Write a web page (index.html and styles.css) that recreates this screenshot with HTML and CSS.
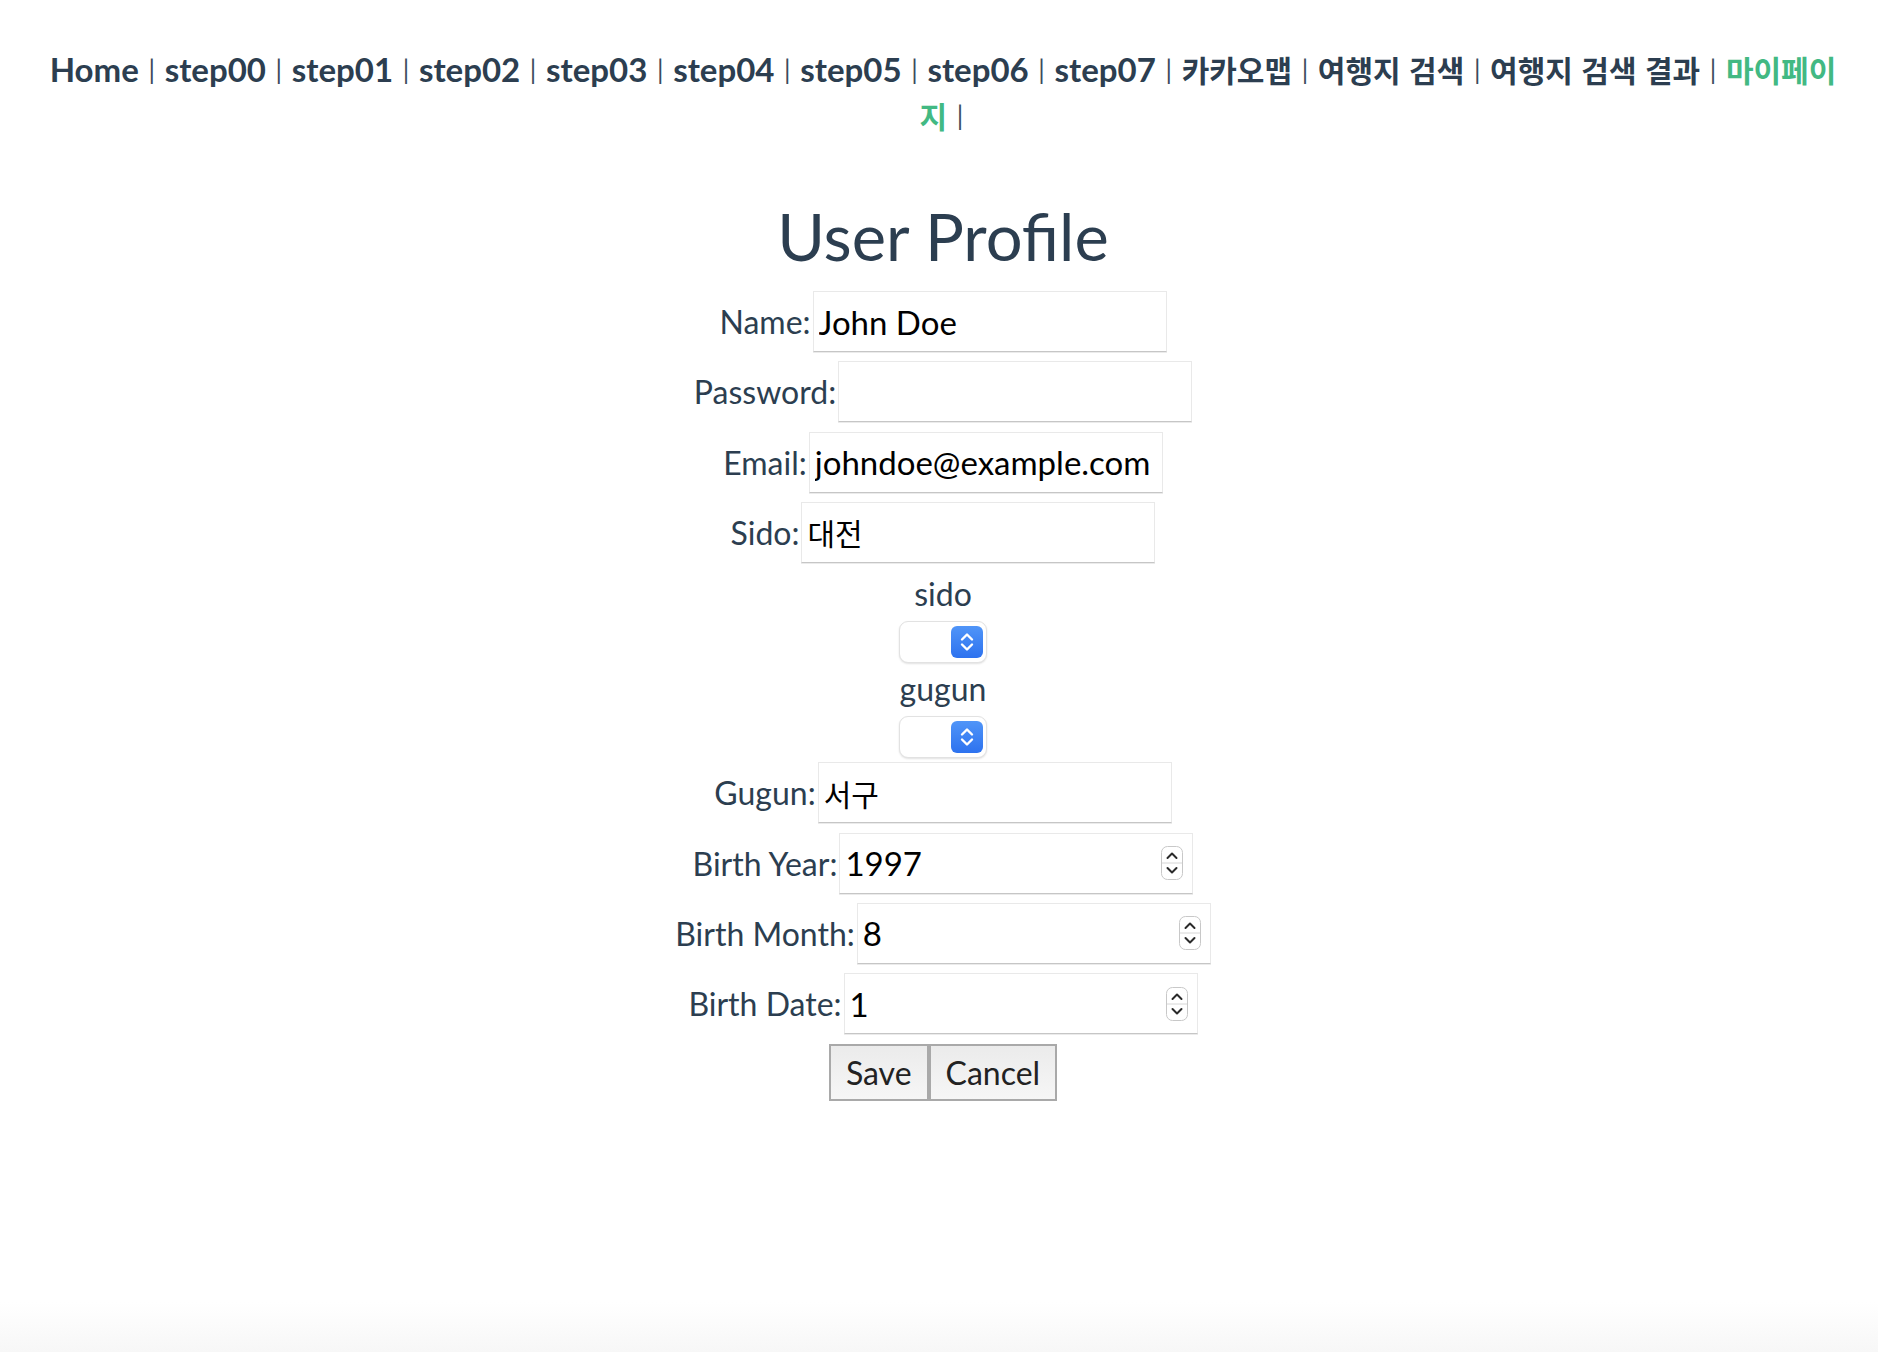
FILE: index.html
```html
<!DOCTYPE html>
<html lang="ko">
<head>
<meta charset="utf-8">
<title>User Profile</title>
<link rel="stylesheet" href="styles.css">
</head>
<body>
<div id="app" class="app">
  <nav class="nav"><a class="nav-link">Home</a><span class="sep"> | </span><a class="nav-link">step00</a><span class="sep"> | </span><a class="nav-link">step01</a><span class="sep"> | </span><a class="nav-link">step02</a><span class="sep"> | </span><a class="nav-link">step03</a><span class="sep"> | </span><a class="nav-link">step04</a><span class="sep"> | </span><a class="nav-link">step05</a><span class="sep"> | </span><a class="nav-link">step06</a><span class="sep"> | </span><a class="nav-link">step07</a><span class="sep"> | </span><a class="nav-link"><span class="ko">카카오맵</span></a><span class="sep"> | </span><a class="nav-link"><span class="ko">여행지 검색</span></a><span class="sep"> | </span><a class="nav-link"><span class="ko">여행지 검색 결과</span></a><span class="sep"> | </span><a class="nav-link active"><span class="ko">마이페이</span><span class="ko">지</span></a><span class="sep"> |</span></nav>

  <main class="profile">
    <h1 class="title">User Profile</h1>
    <form class="form">
      <div class="row"><label class="label">Name:</label><input class="field" type="text" value="John Doe"></div>
      <div class="row"><label class="label">Password:</label><input class="field" type="password" value=""></div>
      <div class="row"><label class="label">Email:</label><input class="field" type="text" value="johndoe@example.com"></div>
      <div class="row"><label class="label">Sido:</label><input class="field field-ko" type="text" value="대전"></div>

      <div class="pick">
        <div class="pick-label">sido</div>
        <span class="select-wrap">
          <select class="select"></select>
          <svg class="select-icon" width="32" height="32" viewBox="0 0 32 32">
            <defs><linearGradient id="gs1" x1="0" y1="0" x2="0" y2="1"><stop offset="0" stop-color="#5095f8"/><stop offset="1" stop-color="#2d72ef"/></linearGradient></defs>
            <rect width="32" height="32" rx="6" fill="url(#gs1)"/>
            <path d="M11 13.5 L16 8.5 L21 13.5" stroke="#fff" stroke-width="2.4" fill="none" stroke-linecap="round" stroke-linejoin="round"/>
            <path d="M11 18.5 L16 23.5 L21 18.5" stroke="#fff" stroke-width="2.4" fill="none" stroke-linecap="round" stroke-linejoin="round"/>
          </svg>
        </span>
      </div>
      <div class="pick">
        <div class="pick-label">gugun</div>
        <span class="select-wrap">
          <select class="select"></select>
          <svg class="select-icon" width="32" height="32" viewBox="0 0 32 32">
            <defs><linearGradient id="gs2" x1="0" y1="0" x2="0" y2="1"><stop offset="0" stop-color="#5095f8"/><stop offset="1" stop-color="#2d72ef"/></linearGradient></defs>
            <rect width="32" height="32" rx="6" fill="url(#gs2)"/>
            <path d="M11 13.5 L16 8.5 L21 13.5" stroke="#fff" stroke-width="2.4" fill="none" stroke-linecap="round" stroke-linejoin="round"/>
            <path d="M11 18.5 L16 23.5 L21 18.5" stroke="#fff" stroke-width="2.4" fill="none" stroke-linecap="round" stroke-linejoin="round"/>
          </svg>
        </span>
      </div>

      <div class="row"><label class="label">Gugun:</label><input class="field field-ko" type="text" value="서구"></div>
      <div class="row"><label class="label">Birth Year:</label>
        <span class="num-wrap"><input class="field" type="text" value="1997">
          <svg class="spin" width="22" height="34" viewBox="0 0 22 34"><rect x="0.5" y="0.5" width="21" height="33" rx="6" fill="#fff" stroke="#c8c8c8"/><line x1="1" y1="17" x2="21" y2="17" stroke="#d6d6d6"/><path d="M6.5 12 L11 7.5 L15.5 12" stroke="#2a2a2a" stroke-width="2" fill="none" stroke-linecap="round" stroke-linejoin="round"/><path d="M6.5 22 L11 26.5 L15.5 22" stroke="#2a2a2a" stroke-width="2" fill="none" stroke-linecap="round" stroke-linejoin="round"/></svg>
        </span>
      </div>
      <div class="row"><label class="label">Birth Month:</label>
        <span class="num-wrap"><input class="field" type="text" value="8">
          <svg class="spin" width="22" height="34" viewBox="0 0 22 34"><rect x="0.5" y="0.5" width="21" height="33" rx="6" fill="#fff" stroke="#c8c8c8"/><line x1="1" y1="17" x2="21" y2="17" stroke="#d6d6d6"/><path d="M6.5 12 L11 7.5 L15.5 12" stroke="#2a2a2a" stroke-width="2" fill="none" stroke-linecap="round" stroke-linejoin="round"/><path d="M6.5 22 L11 26.5 L15.5 22" stroke="#2a2a2a" stroke-width="2" fill="none" stroke-linecap="round" stroke-linejoin="round"/></svg>
        </span>
      </div>
      <div class="row"><label class="label">Birth Date:</label>
        <span class="num-wrap"><input class="field" type="text" value="1">
          <svg class="spin" width="22" height="34" viewBox="0 0 22 34"><rect x="0.5" y="0.5" width="21" height="33" rx="6" fill="#fff" stroke="#c8c8c8"/><line x1="1" y1="17" x2="21" y2="17" stroke="#d6d6d6"/><path d="M6.5 12 L11 7.5 L15.5 12" stroke="#2a2a2a" stroke-width="2" fill="none" stroke-linecap="round" stroke-linejoin="round"/><path d="M6.5 22 L11 26.5 L15.5 22" stroke="#2a2a2a" stroke-width="2" fill="none" stroke-linecap="round" stroke-linejoin="round"/></svg>
        </span>
      </div>

      <div class="actions">
        <button class="btn" type="button">Save</button><button class="btn" type="button">Cancel</button>
      </div>
    </form>
  </main>
</div>
</body>
</html>
```

FILE: styles.css
```css
html {
  min-height: 100%;
  background: linear-gradient(180deg, #ffffff 0, #ffffff calc(100% - 50px), #f7f7f7 100%);
}

body {
  margin: 0 0 0 8px;
}

.app {
  font-family: "Lato", "Noto Sans CJK KR", sans-serif;
  color: #2c3e50;
  text-align: center;
  font-size: 32px;
}

.nav {
  padding: 46px 30px 30px;
  line-height: 46px;
  font-size: 33px;
}

.nav-link {
  font-weight: bold;
  color: #2c3e50;
  text-decoration: none;
}

.nav-link.active {
  color: #42b983;
}

.sep {
  font-family: "Lato", sans-serif;
  font-size: 26px;
  font-weight: normal;
  line-height: 0;
  color: #3a4a5c;
  padding: 0 3px;
  vertical-align: 3px;
}

.ko {
  font-family: "Noto Sans CJK KR", sans-serif;
  font-size: 30px;
  line-height: 0;
}

.title {
  font-size: 65px;
  font-weight: normal;
  line-height: 76px;
  margin: 30px 0 17px;
}

.form {
  display: flex;
  flex-direction: column;
  align-items: center;
}

.row {
  display: flex;
  align-items: center;
  justify-content: center;
  height: 61px;
  margin-bottom: 9.33px;
}

.label {
  font-size: 32px;
  color: #2c3e50;
  margin-right: 2px;
}

.field {
  box-sizing: border-box;
  width: 354px;
  height: 61px;
  padding: 0 5px;
  font-family: "Lato", "Noto Sans CJK KR", sans-serif;
  font-size: 33px;
  color: #000;
  background: #fff;
  border: 1px solid #e9e9e9;
  border-bottom-color: #c6c6c6;
  box-shadow: 0 1px 0 rgba(0, 0, 0, 0.08);
  border-radius: 0;
  outline: none;
}

.field-ko {
  font-family: "Noto Sans CJK KR", sans-serif;
  font-size: 30px;
}

.num-wrap {
  position: relative;
  display: inline-block;
}

.spin {
  position: absolute;
  right: 10px;
  top: 50%;
  transform: translateY(-50%);
}

.pick {
  display: flex;
  flex-direction: column;
  align-items: center;
  margin-bottom: 4px;
}

.pick-label {
  line-height: 44px;
  font-size: 32px;
  margin-bottom: 5px;
}

.select-wrap {
  position: relative;
  display: block;
  width: 88px;
  height: 42px;
}

.select {
  appearance: none;
  -webkit-appearance: none;
  display: block;
  box-sizing: border-box;
  width: 88px;
  height: 42px;
  margin: 0;
  background: #fff;
  border: 1px solid #e2e2e2;
  border-radius: 9px;
  box-shadow: 0 1px 2px rgba(0, 0, 0, 0.12);
}

.select-icon {
  position: absolute;
  right: 4px;
  top: 5px;
}

.actions {
  display: flex;
  justify-content: center;
}

.btn {
  height: 57px;
  padding: 0 15px;
  font-family: "Lato", sans-serif;
  font-size: 32px;
  color: #222;
  background: linear-gradient(180deg, #ebebeb 0%, #f6f6f6 100%);
  border: 2px solid #a9a9a9;
  border-radius: 0;
  margin: 0;
}
```
